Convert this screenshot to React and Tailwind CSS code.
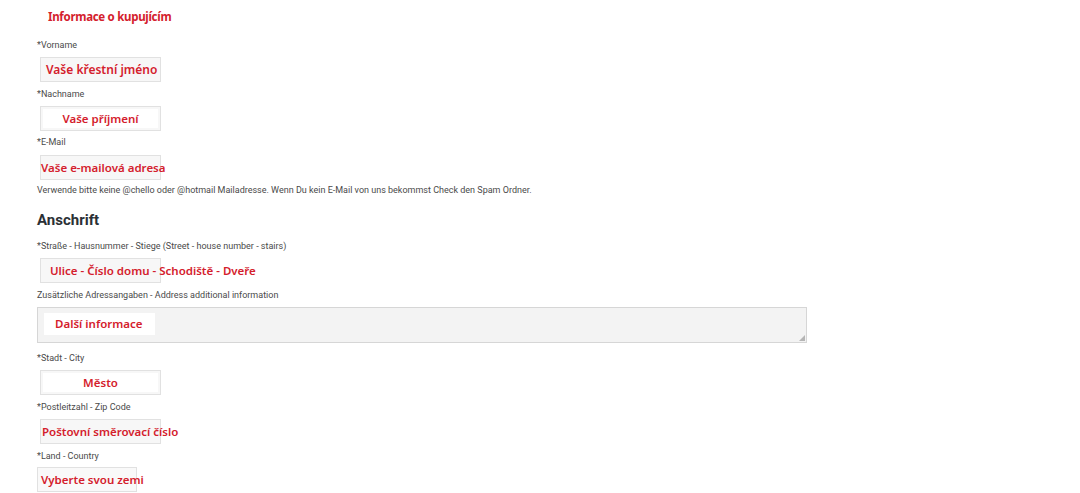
const red = 'text-[#d4202c]';

function Label({ children, className = '' }) {
  return (
    <div className={`h-3 leading-3 text-[9px] text-[#4a4a4a] whitespace-nowrap font-['Roboto',sans-serif] ${className}`}>{children}</div>
  );
}

function Box({ children, className = '', inner = '' }) {
  return (
    <div className={`h-[25px] w-[121px] ml-[3px] border border-[#e1e1e1] bg-[#f7f7f7] flex items-center ${className}`}>
      <div className={`flex items-center h-full whitespace-nowrap text-[11.5px] font-semibold ${red} ${inner}`}>{children}</div>
    </div>
  );
}

export default function App() {
  return (
    <div className="w-[1080px] h-[493px] bg-white overflow-hidden pl-[37px] font-['Noto_Sans','Open_Sans',sans-serif]">
      <div className={`h-[18px] mt-[8px] ml-[11px] leading-[18px] text-[11.5px] tracking-[-0.3px] font-bold ${red}`}>Informace o kupujícím</div>

      <Label className="mt-[13px]">*Vorname</Label>
      <Box className="mt-[6px]" inner="pl-[5px] text-[12px]">Vaše křestní jméno</Box>

      <Label className="mt-[6px]">*Nachname</Label>
      <Box className="mt-[6px] p-[2px]" inner="bg-white w-full justify-center">Vaše příjmení</Box>

      <Label className="mt-[5px]">*E-Mail</Label>
      <Box className="mt-[7px]">Vaše e-mailová adresa</Box>

      <Label className="mt-[4px] text-[9.1px]">
        Verwende bitte keine @chello oder @hotmail Mailadresse. Wenn Du kein E-Mail von uns bekommst Check den Spam Ordner.
      </Label>

      <div className="mt-[14px] h-5 leading-5 text-[15px] font-bold text-[#2b3035] font-['Roboto',sans-serif]">Anschrift</div>

      <Label className="mt-[10px]">*Straße - Hausnummer - Stiege (Street - house number - stairs)</Label>
      <Box className="mt-[6px]" inner="pl-[9px]">Ulice - Číslo domu - Schodiště - Dveře</Box>

      <Label className="mt-[6px]">Zusätzliche Adressangaben - Address additional information</Label>
      <div className="relative mt-[6px] h-[36px] w-[770px] border border-[#d6d6d6] bg-[#f3f3f3] px-[6px] py-[5px]">
        <div className={`h-[22px] w-[111px] bg-white flex items-center pl-[11px] text-[11.5px] font-semibold whitespace-nowrap ${red}`}>Další informace</div>
        <svg className="absolute right-[1px] bottom-[1px]" width="6" height="6" viewBox="0 0 6 6">
          <path d="M6 0 L6 6 L0 6 Z" fill="#b5b5b5" />
        </svg>
      </div>

      <Label className="mt-[9px]">*Stadt - City</Label>
      <Box className="mt-[6px] p-[2px]" inner="bg-white w-full justify-center">Město</Box>

      <Label className="mt-[6px]">*Postleitzahl - Zip Code</Label>
      <Box className="mt-[6px]" inner="pl-[1px]">Poštovní směrovací číslo</Box>

      <Label className="mt-[6px]">*Land - Country</Label>
      <div className="mt-[5px] h-[25px] w-[100px] border border-[#e1e1e1] bg-[#f9f9f9] flex items-center">
        <span className={`pl-[3px] whitespace-nowrap text-[11.5px] font-semibold ${red}`}>Vyberte svou zemi</span>
      </div>
    </div>
  );
}
